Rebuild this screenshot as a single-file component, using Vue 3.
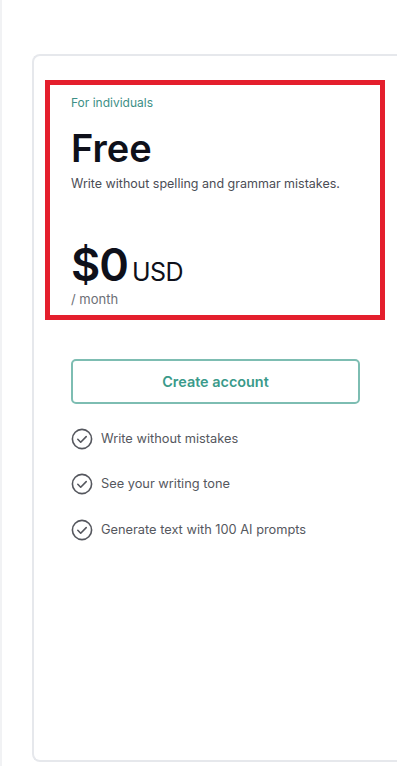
<script setup>
const features = ['Write without mistakes', 'See your writing tone', 'Generate text with 100 AI prompts']
</script>

<template>
  <div class="page">
    <div class="card">
      <section class="plan">
        <p class="eyebrow">For individuals</p>
        <h2 class="name">Free</h2>
        <p class="desc">Write without spelling and grammar mistakes.</p>
        <div class="price">
          <span class="amount">$0</span>
          <span class="currency">USD</span>
        </div>
        <p class="period">/ month</p>
      </section>

      <div class="body">
        <button type="button" class="cta">Create account</button>
        <ul class="features">
          <li v-for="f in features" :key="f" class="feature">
            <svg class="check" width="22" height="22" viewBox="0 0 22 22" fill="none">
              <circle cx="11" cy="11" r="9.6" stroke="#55575e" stroke-width="1.6" />
              <path d="M6.8 11.3l2.9 2.9 5.5-5.6" stroke="#55575e" stroke-width="1.6" stroke-linecap="round" stroke-linejoin="round" />
            </svg>
            <span>{{ f }}</span>
          </li>
        </ul>
      </div>
    </div>
  </div>
</template>

<style>
html,
body {
  margin: 0;
  background: #fff;
}
</style>

<style scoped>
.page {
  box-sizing: border-box;
  width: 400px;
  height: 766px;
  padding: 54px 0 4px 30px;
  overflow: hidden;
  background: #fff;
  border-left: 2px solid #f1f2f4;
  font-family: Inter, "Noto Sans", sans-serif;
}
.card {
  box-sizing: border-box;
  width: 365px;
  height: 708px;
  padding: 24px 0 0 11px;
  background: #fff;
  border: 2px solid #e6e8ec;
  border-right: none;
  border-radius: 8px 0 0 8px;
}
.plan {
  box-sizing: border-box;
  width: 340px;
  height: 240px;
  padding: 10px 0 0 21px;
  border: 5px solid #e41f2d;
}
.eyebrow {
  margin: 0;
  font-size: 12px;
  line-height: 16px;
  color: #3d8f86;
}
.name {
  margin: 17px 0 0;
  font-size: 38px;
  line-height: 40px;
  font-weight: 600;
  color: #0e101a;
}
.desc {
  margin: 8px 0 0;
  font-size: 12.5px;
  line-height: 16px;
  color: #4b4d55;
}
.price {
  display: flex;
  align-items: baseline;
  gap: 4px;
  margin-top: 54px;
  line-height: 38px;
  color: #0e101a;
}
.amount {
  font-size: 45px;
  font-weight: 600;
  letter-spacing: -1px;
}
.currency {
  font-size: 25px;
  letter-spacing: -0.5px;
}
.period {
  margin: 0;
  font-size: 13px;
  line-height: 16px;
  color: #6d6f76;
}
.body {
  width: 289px;
  margin: 39px 0 0 26px;
}
.cta {
  display: block;
  box-sizing: border-box;
  width: 100%;
  height: 45px;
  background: #fff;
  border: 2px solid #7dbdb2;
  border-radius: 5px;
  font: 600 14.4px Inter, "Noto Sans", sans-serif;
  color: #3a9a8a;
}
.features {
  list-style: none;
  margin: 24px 0 0;
  padding: 0;
  display: flex;
  flex-direction: column;
  gap: 23.4px;
}
.feature {
  display: flex;
  align-items: center;
  gap: 8px;
  font-size: 12.8px;
  line-height: 22px;
  color: #55575e;
}
.check {
  flex-shrink: 0;
}
</style>
